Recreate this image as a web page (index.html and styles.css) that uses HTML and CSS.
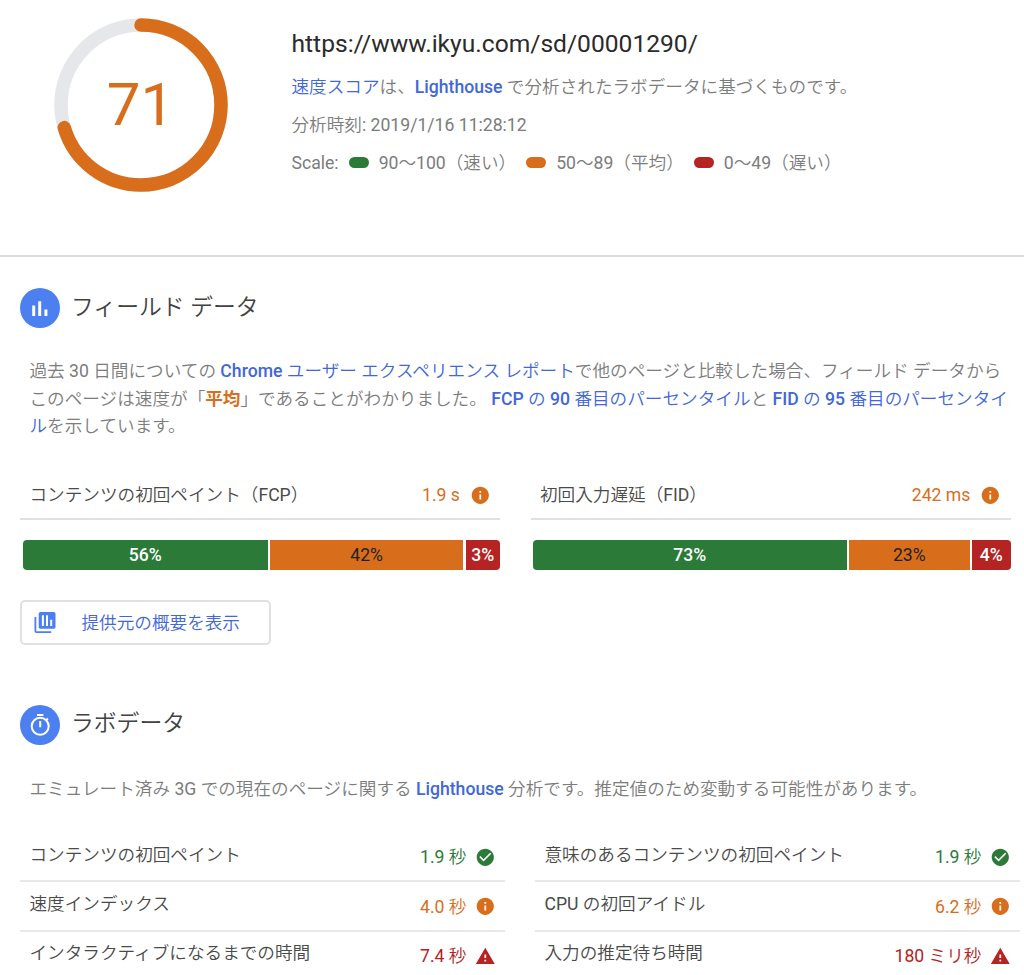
FILE: index.html
```
<!DOCTYPE html>
<html lang="ja">

<head>
  <meta charset="UTF-8" />
  <meta name="viewport" content="width=device-width, initial-scale=1" />
  <title>PageSpeed Insights</title>
  <link rel="stylesheet" href="styles.css">
</head>

<body>
  <!-- shared status icons -->
  <svg class="icon-defs" aria-hidden="true">
    <symbol id="icon-average" viewBox="0 0 24 24">
      <path d="M12 2C6.48 2 2 6.48 2 12s4.48 10 10 10 10-4.48 10-10S17.52 2 12 2zm1 15h-2v-6h2v6zm0-8h-2V7h2v2z" />
    </symbol>
    <symbol id="icon-fast" viewBox="0 0 24 24">
      <path d="M12 2C6.48 2 2 6.48 2 12s4.48 10 10 10 10-4.48 10-10S17.52 2 12 2zm-2 15l-5-5 1.41-1.41L10 14.17l7.59-7.59L19 8l-9 9z" />
    </symbol>
    <symbol id="icon-slow" viewBox="0 0 24 24">
      <path d="M1 21h22L12 2 1 21zm12-3h-2v-2h2v2zm0-4h-2v-4h2v4z" />
    </symbol>
  </svg>

  <header class="summary">
    <div class="gauge">
      <svg class="gauge-ring" viewBox="0 0 174 174">
        <circle class="gauge-track" cx="87" cy="87" r="80" />
        <circle class="gauge-value" cx="87" cy="87" r="80" stroke-dasharray="353.4 502.65" transform="rotate(-90 87 87)" />
      </svg>
      <div class="gauge-score">71</div>
    </div>
    <div class="summary-info">
      <h1 class="url">https://www.ikyu.com/sd/00001290/</h1>
      <p><a href="#">速度スコア</a>は、<a href="#">Lighthouse</a> で分析されたラボデータに基づくものです。</p>
      <p>分析時刻: 2019/1/16 11:28:12</p>
      <p class="scale">
        <span class="scale-label">Scale:</span>
        <span class="scale-item"><i class="pill fast"></i>90～100（速い）</span>
        <span class="scale-item"><i class="pill average"></i>50～89（平均）</span>
        <span class="scale-item"><i class="pill slow"></i>0～49（遅い）</span>
      </p>
    </div>
  </header>

  <section class="field">
    <div class="section-head">
      <svg class="section-icon" viewBox="0 0 40 40">
        <circle cx="20" cy="20" r="20" fill="#4c7ff0" />
        <path fill="#fff" d="M12.2 17.500h3v10.500h-3zM18.200 13.200h3v14.800h-3zM24.400 21.600h3v6.400h-3z" />
      </svg>
      <h2>フィールド データ</h2>
    </div>
    <p class="description">過去 30 日間についての <a href="#">Chrome ユーザー エクスペリエンス レポート</a>で他のページと比較した場合、フィールド データから<br>このページは速度が「<b>平均</b>」であることがわかりました。 <a href="#">FCP の 90 番目のパーセンタイル</a>と <a href="#">FID の 95 番目のパーセンタイ<br>ル</a>を示しています。</p>

    <div class="field-metrics">
      <div class="field-metric">
        <div class="metric-row">
          <span class="metric-name">コンテンツの初回ペイント（FCP）</span>
          <span class="metric-value text-average">1.9 s</span>
          <svg class="status text-average"><use href="#icon-average" /></svg>
        </div>
        <div class="bar">
          <div class="bar-part fast" style="flex-grow: 245.5">56%</div>
          <div class="bar-part average" style="flex-grow: 193">42%</div>
          <div class="bar-part slow" style="flex-grow: 34.5">3%</div>
        </div>
      </div>
      <div class="field-metric">
        <div class="metric-row">
          <span class="metric-name">初回入力遅延（FID）</span>
          <span class="metric-value text-average">242 ms</span>
          <svg class="status text-average"><use href="#icon-average" /></svg>
        </div>
        <div class="bar">
          <div class="bar-part fast" style="flex-grow: 313.5">73%</div>
          <div class="bar-part average" style="flex-grow: 120.5">23%</div>
          <div class="bar-part slow" style="flex-grow: 38.5">4%</div>
        </div>
      </div>
    </div>

    <button class="origin-button">
      <svg class="origin-icon" viewBox="0 0 22 22">
        <path d="M2.300 5H.5v13.700c0 1.400 1 2.300 2.300 2.300h14.400V19.200H2.300z" />
        <path fill-rule="evenodd" d="M6.500 0h13.200c1 0 1.800.8 1.800 1.800v13.200c0 1-.8 1.800-1.800 1.800H6.500c-1 0-1.800-.8-1.800-1.800V1.800C4.700.8 5.500 0 6.500 0zM7.900 3.200v10.800h2V3.200zM12 3.200v10.800h2V3.200zM16.200 7.800v6.200h2V7.800z" />
      </svg>
      <span>提供元の概要を表示</span>
    </button>
  </section>

  <section class="lab">
    <div class="section-head">
      <svg class="section-icon" viewBox="0 0 40 40">
        <circle cx="20" cy="20" r="20" fill="#4c7ff0" />
        <g fill="none" stroke="#fff" stroke-width="2">
          <circle cx="20.200" cy="21.300" r="8.500" />
          <path d="M17 9.900h6.400M20.200 16v6.300M25.800 15.600l2.100-2.100" />
        </g>
      </svg>
      <h2>ラボデータ</h2>
    </div>
    <p class="description">エミュレート済み 3G での現在のページに関する <a href="#">Lighthouse</a> 分析です。推定値のため変動する可能性があります。</p>

    <div class="lab-metrics">
      <div class="metric-row">
        <span class="metric-name">コンテンツの初回ペイント</span>
        <span class="metric-value text-fast">1.9 秒</span>
        <svg class="status text-fast"><use href="#icon-fast" /></svg>
      </div>
      <div class="metric-row">
        <span class="metric-name">意味のあるコンテンツの初回ペイント</span>
        <span class="metric-value text-fast">1.9 秒</span>
        <svg class="status text-fast"><use href="#icon-fast" /></svg>
      </div>
      <div class="metric-row">
        <span class="metric-name">速度インデックス</span>
        <span class="metric-value text-average">4.0 秒</span>
        <svg class="status text-average"><use href="#icon-average" /></svg>
      </div>
      <div class="metric-row">
        <span class="metric-name">CPU の初回アイドル</span>
        <span class="metric-value text-average">6.2 秒</span>
        <svg class="status text-average"><use href="#icon-average" /></svg>
      </div>
      <div class="metric-row">
        <span class="metric-name">インタラクティブになるまでの時間</span>
        <span class="metric-value text-slow">7.4 秒</span>
        <svg class="status text-slow"><use href="#icon-slow" /></svg>
      </div>
      <div class="metric-row">
        <span class="metric-name">入力の推定待ち時間</span>
        <span class="metric-value text-slow">180 ミリ秒</span>
        <svg class="status text-slow"><use href="#icon-slow" /></svg>
      </div>
    </div>
  </section>
</body>

</html>
```
FILE: styles.css
```
* {
  margin: 0;
  padding: 0;
  box-sizing: border-box;
}

body {
  height: 975px;
  overflow: hidden;
  background: #fff;
  color: #7c7c7c;
  font-family: Roboto, "Noto Sans CJK JP DemiLight", "Noto Sans CJK JP Light", "Noto Sans CJK JP", sans-serif;
  font-size: 17.63px;
  line-height: 28px;
  white-space: nowrap;
}

a {
  color: #4167d8;
  font-weight: 500;
  text-decoration: none;
}

.icon-defs {
  display: none;
}

/* score summary */
.summary {
  display: flex;
  height: 257px;
  padding: 17.5px 0 0 53.5px;
  border-bottom: 2px solid #dcdcdc;
}

.gauge {
  display: grid;
  width: 174px;
  height: 174px;
  margin-right: 64px;
}

.gauge-ring,
.gauge-score {
  grid-area: 1 / 1;
}

.gauge-ring circle {
  fill: none;
  stroke-width: 13.5;
}

.gauge-ring .gauge-track {
  stroke: #e5e7eb;
}

.gauge-ring .gauge-value {
  stroke: #d86e1b;
  stroke-linecap: round;
}

.gauge-score {
  color: #d86e1b;
  font-size: 60px;
  line-height: 174px;
  text-align: center;
}

.summary-info {
  padding-top: 10px;
}

.url {
  height: 32px;
  margin-bottom: 13px;
  color: #2b2b2b;
  font-size: 24.6px;
  font-weight: 400;
  line-height: 32px;
}

.summary-info p {
  margin-bottom: 10px;
}

.scale {
  display: flex;
}

.scale-label {
  margin-right: 10px;
}

.scale-item {
  display: flex;
  align-items: center;
  margin-right: 10px;
}

.pill {
  width: 20px;
  height: 11px;
  margin-right: 10px;
  border-radius: 6px;
}

.fast {
  background: #2b7a37;
}

.average {
  background: #d86e1b;
}

.slow {
  background: #b52323;
}

.text-fast {
  color: #2b7a37;
}

.text-average {
  color: #d86e1b;
}

.text-slow {
  color: #b52323;
}

/* sections */
.field {
  height: 448px;
  padding: 30.5px 13px 0 20px;
}

.lab {
  padding-left: 20px;
}

.section-head {
  display: flex;
  align-items: center;
  gap: 11px;
}

.section-icon {
  width: 40px;
  height: 40px;
}

.section-head h2 {
  padding-bottom: 3px;
  color: #424242;
  font-size: 22.8px;
  font-weight: 400;
  line-height: 36px;
}

.field h2 {
  padding-bottom: 0;
}

.description {
  margin: 30.5px 0 0 9.500px;
  line-height: 27.6px;
}

.description b {
  color: #d86e1b;
  font-family: Roboto, "Noto Sans CJK JP", sans-serif;
}

.metric-row {
  display: flex;
  align-items: center;
  padding: 0 9.500px 0 9.500px;
}

.metric-name {
  flex: 1;
  color: #4a4a4a;
}

.metric-value {
  margin-right: 10px;
}

.status {
  width: 20.6px;
  height: 20.6px;
  fill: currentColor;
}

/* field data */
.field-metrics {
  display: grid;
  grid-template-columns: 480px 480px;
  gap: 30.5px;
  margin-top: 31px;
}

.field .metric-row {
  height: 48px;
  border-bottom: 2px solid #e0e0e0;
}

.field .status {
  margin-top: 1px;
}

.bar {
  display: flex;
  gap: 2.500px;
  height: 30px;
  margin-top: 20px;
  padding-left: 2.500px;
}

.bar-part {
  flex-basis: 0;
  color: #fff;
  font-weight: 500;
  line-height: 30px;
  text-align: center;
}

.bar-part.average {
  color: #212121;
  font-weight: 400;
}

.bar-part:first-child {
  border-radius: 4px 0 0 4px;
}

.bar-part:last-child {
  border-radius: 0 4px 4px 0;
}

.origin-button {
  display: flex;
  align-items: center;
  width: 251px;
  height: 45px;
  margin-top: 30.5px;
  padding-left: 11.500px;
  border: 2px solid #e0e0e0;
  border-radius: 5px;
  background: #fff;
  color: #4167d8;
  font: inherit;
}

.origin-icon {
  width: 22px;
  height: 22px;
  margin-right: 26px;
  fill: #4c7ff0;
}

/* lab data */
.lab-metrics {
  display: grid;
  grid-template-columns: 485px 485px;
  column-gap: 30px;
  margin-top: 30px;
}

.lab .metric-row {
  height: 49.3px;
  padding-right: 9px;
  border-bottom: 2px solid #e8e8e8;
}

.lab .metric-value,
.lab .status {
  margin-top: 1px;
}

.lab .metric-value {
  margin-right: 9px;
}

.lab .metric-name {
  padding-bottom: 4px;
}
```
